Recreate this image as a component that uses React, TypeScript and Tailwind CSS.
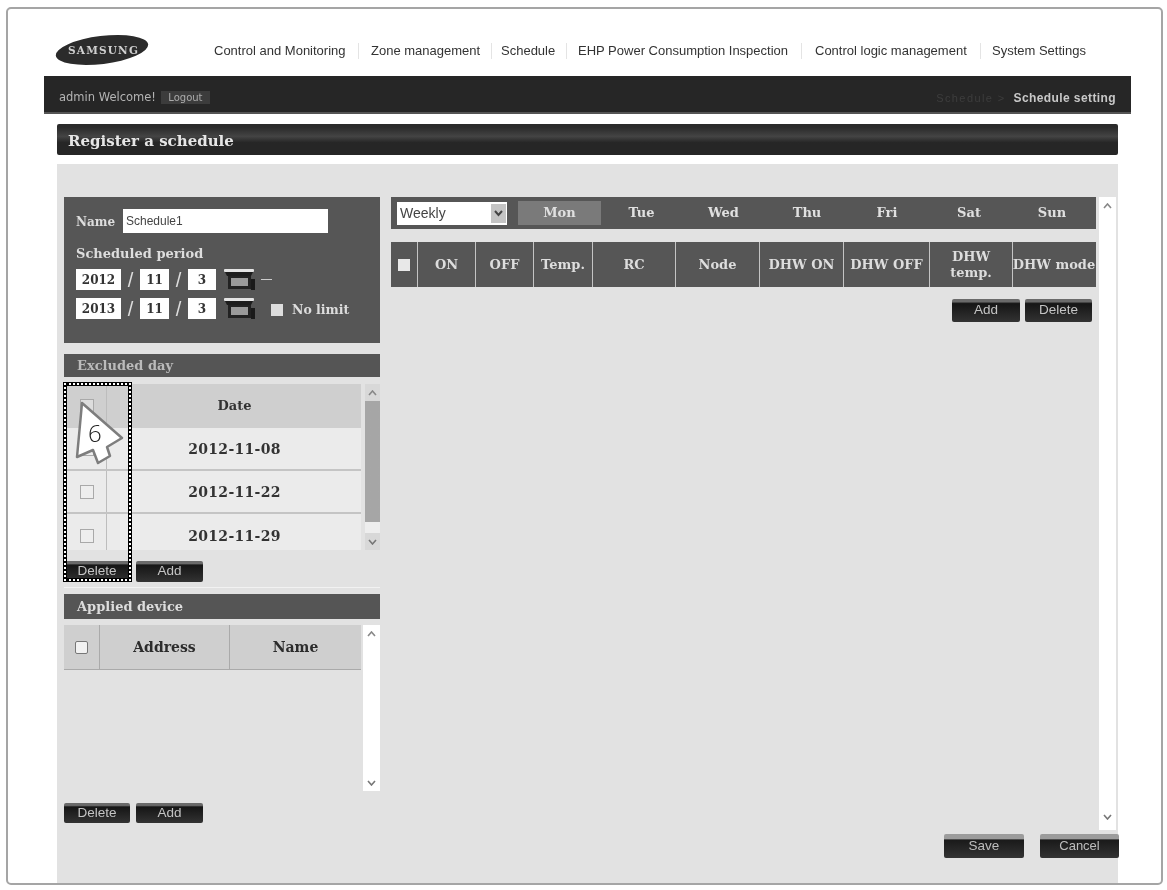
import type { ReactNode } from "react";

const serif = "font-['DejaVu_Serif',serif]";
const sans = "font-['Liberation_Sans',Arial,sans-serif]";

function SamsungLogo() {
  return (
    <svg width="94" height="32" viewBox="0 0 94 32">
      <ellipse cx="47" cy="16" rx="46.5" ry="14" transform="rotate(-7 47 16)" fill="#2b2b2b" />
      <text x="13" y="20" fontFamily="'DejaVu Serif', serif" fontWeight="700" fontSize="10.5" letterSpacing="1.2" fill="#d0d0d0">
        SAMSUNG
      </text>
    </svg>
  );
}

function CalendarIcon() {
  return (
    <svg width="33" height="23" viewBox="0 0 33 23" className="shrink-0">
      <rect x="1" y="1" width="30" height="3" rx="1" fill="#e4e4e4" />
      <path d="M2 4h28l-2 4H4z" fill="#1d1d1d" />
      <path d="M5 8h23v13H5z" fill="#222222" />
      <rect x="8" y="10" width="17" height="8" fill="#9a9a9a" />
      <rect x="28" y="11" width="4" height="11" fill="#1a1a1a" />
    </svg>
  );
}

function DarkButton({ label, className }: { label: string; className: string }) {
  return (
    <button className={`flex items-center justify-center rounded-[2px] bg-gradient-to-b from-[#6a6a6a] from-[12%] via-[#161616] via-[20%] to-[#333333] text-[13.5px] text-[#c4c4c4] ${sans} ${className}`}>
      {label}
    </button>
  );
}

function ScrollEnds({ track, className, below }: { track: string; className: string; below?: string }) {
  return (
    <div className={`flex flex-col ${className}`}>
      <div className="flex h-[17px] items-center justify-center text-[#888888]">
        <svg width="9" height="6" viewBox="0 0 9 6"><path d="M1 5l3.5-4L8 5" fill="none" stroke="currentColor" strokeWidth="1.6" /></svg>
      </div>
      <div className={`flex-1 ${track}`} />
      <div className="flex h-[17px] items-center justify-center text-[#777777]">
        <svg width="9" height="6" viewBox="0 0 9 6"><path d="M1 1l3.5 4L8 1" fill="none" stroke="currentColor" strokeWidth="1.6" /></svg>
      </div>
      {below && <div className={below} />}
    </div>
  );
}

function SectionHead({ children, className }: { children: ReactNode; className: string }) {
  return (
    <div className={`flex w-[316px] items-center bg-[#555555] pl-[13px] text-[13px] font-bold ${serif} ${className}`}>
      {children}
    </div>
  );
}

function DateBox({ value, className }: { value: string; className: string }) {
  return (
    <span className={`flex h-[21px] items-center justify-center bg-white text-xs font-bold text-[#333333] ${serif} ${className}`}>
      {value}
    </span>
  );
}

function DateRow({ year, children }: { year: string; children?: ReactNode }) {
  return (
    <div className="flex items-center text-[#dddddd]">
      <DateBox value={year} className="w-[45px]" />
      <span className="w-[19px] text-center text-xl font-light leading-none">/</span>
      <DateBox value="11" className="w-[29px]" />
      <span className="w-[19px] text-center text-xl font-light leading-none">/</span>
      <DateBox value="3" className="w-[28px]" />
      <span className="ml-[7px]"><CalendarIcon /></span>
      {children}
    </div>
  );
}

function ExcludedRow({ date }: { date: string }) {
  return (
    <div className="flex h-[43px] border-b-2 border-[#c4c4c4] bg-[#ebebeb] last:border-b-0">
      <div className="flex w-[43px] items-center justify-center border-r border-[#bdbdbd] pl-[3px]">
        <span className="size-[14px] border border-[#a9a9a9] bg-[#eeeeee]" />
      </div>
      <div className="w-[25px]" />
      <div className={`flex flex-1 items-center justify-center pr-[24px] text-sm font-bold tracking-[0.3px] text-[#333333] ${serif}`}>{date}</div>
    </div>
  );
}

const navItems: [string, string][] = [
  ["Control and Monitoring", "w-[132px]"],
  ["Zone management", "w-[110px]"],
  ["Schedule", "w-[54px]"],
  ["EHP Power Consumption Inspection", "w-[210px]"],
  ["Control logic management", "w-[153px]"],
  ["System Settings", "w-[96px]"],
];
const navGaps = ["w-[25px]", "w-[20px]", "w-[23px]", "w-[27px]", "w-[24px]"];

const days = [
  ["Tue", "w-[81px]"],
  ["Wed", "w-[83px]"],
  ["Thu", "w-[84px]"],
  ["Fri", "w-[76px]"],
  ["Sat", "w-[88px]"],
  ["Sun", "w-[78px]"],
];

const columns = ["ON", "OFF", "Temp.", "RC", "Node", "DHW ON", "DHW OFF", "DHW temp.", "DHW mode"];

export default function App() {
  return (
    <div className={`h-[890px] w-[1167px] overflow-hidden bg-white pl-[6px] pt-[7px] blur-[0.6px] ${sans}`}>
      <div className="relative h-[878px] w-[1157px] overflow-hidden rounded-[5px] border-2 border-[#a5a5a5] bg-white">
        {/* Top menu */}
        <div className="flex h-[67px] items-start">
          <div className="ml-[47px] mt-[25px] w-[111px]"><SamsungLogo /></div>
          <nav className="ml-[48px] mt-[32px] flex items-center text-[13px] text-[#333333]">
            {navItems.map(([label, width], i) => (
              <div key={label} className="flex items-center">
                <span className={`whitespace-nowrap ${width}`}>{label}</span>
                {i < navGaps.length && (
                  <span className={`flex justify-center ${navGaps[i]}`}>
                    <span className="h-4 w-px bg-[#e4e4e4]" />
                  </span>
                )}
              </div>
            ))}
          </nav>
        </div>

        {/* User bar */}
        <div className="ml-[36px] flex h-[38px] w-[1087px] items-end justify-between border-b-2 border-[#555555] bg-[#262626] pb-[6px] pl-[15px] pr-[15px] text-[11px]">
          <div className="flex items-center font-['DejaVu_Sans',sans-serif] text-[#b4b4b4]">
            <span className="text-[11.5px]">admin Welcome!</span>
            <span className="ml-[5px] flex h-[13px] w-[49px] items-center justify-center bg-[#3c3c3c] text-[10px] text-[#aaaaaa]">Logout</span>
          </div>
          <div className="flex items-center gap-[8px] tracking-[0.4px]">
            <span className="tracking-[1.4px] text-[#3d3d3d]">Schedule &gt;</span>
            <span className={`text-xs font-bold text-[#c8c8c8] ${sans}`}>Schedule setting</span>
          </div>
        </div>

        {/* Title */}
        <div className={`ml-[49px] mt-[10px] flex h-[31px] w-[1061px] items-center rounded-[2px] bg-gradient-to-b from-[#2a2a2a] from-10% via-[#444444] via-40% to-[#262626] to-60% pl-[11px] pt-[3px] text-[15px] font-bold text-[#e6e6e6] ${serif}`}>
          Register a schedule
        </div>

        {/* Content */}
        <div className="ml-[49px] mt-[9px] flex h-[720px] w-[1061px] bg-[#e2e2e2] pt-[33px]">
          {/* Left column */}
          <div className="ml-[7px] flex w-[316px] shrink-0 flex-col">
            <div className="flex h-[146px] flex-col bg-[#565656] pl-[12px] pt-[12px] text-[#dddddd]">
              <div className="flex items-center">
                <span className={`w-[47px] pt-[2px] text-xs font-bold ${serif}`}>Name</span>
                <span className="flex h-[24px] w-[205px] items-center bg-white pl-[3px] text-xs text-[#444444]">Schedule1</span>
              </div>
              <div className={`mt-[12px] text-[13px] font-bold leading-[17px] ${serif}`}>Scheduled period</div>
              <div className="mt-[6px] flex flex-col gap-[6px]">
                <DateRow year="2012"><span className="ml-[5px] h-px w-[11px] bg-[#cccccc]" /></DateRow>
                <DateRow year="2013">
                  <span className="ml-[15px] mt-[2px] size-[12px] bg-[#dddddd]" />
                  <span className={`ml-[9px] mt-[3px] text-[12.5px] font-bold ${serif}`}>No limit</span>
                </DateRow>
              </div>
            </div>

            <SectionHead className="mt-[11px] h-[23px] text-[#bbbbbb]">Excluded day</SectionHead>
            <div className="mt-[7px] flex h-[166px]">
              <div className="w-[297px] overflow-hidden">
                <div className="flex h-[44px] bg-[#cfcfcf]">
                  <div className="flex w-[43px] items-center justify-center border-r border-[#bdbdbd] pl-[3px]">
                    <span className="size-[14px] border border-[#a9a9a9] bg-[#dddddd]" />
                  </div>
                  <div className="w-[25px]" />
                  <div className={`flex flex-1 items-center justify-center pr-[24px] text-[13px] font-bold text-[#333333] ${serif}`}>Date</div>
                </div>
                <ExcludedRow date="2012-11-08" />
                <ExcludedRow date="2012-11-22" />
                <ExcludedRow date="2012-11-29" />
              </div>
              <ScrollEnds track="bg-gradient-to-b from-[#a6a6a6] from-[92%] to-[#eeeeee] to-[92%]" className="ml-[4px] w-[15px] bg-[#d8d8d8]" />
            </div>
            <div className="mt-[11px] flex h-[21px] gap-[6px]">
              <DarkButton label="Delete" className="w-[66px]" />
              <DarkButton label="Add" className="w-[67px]" />
            </div>
            <div className="mt-[5px] h-px bg-[#f2f2f2]" />

            <SectionHead className="mt-[6px] h-[25px] text-[#dddddd]">Applied device</SectionHead>
            <div className="mt-[6px] flex h-[166px] items-start">
              <div className={`grid h-[45px] w-[297px] grid-cols-[36px_130px_131px] border-b border-[#aaaaaa] bg-[#cfcfcf] text-sm font-bold text-[#2c2c2c] ${serif}`}>
                <div className="flex items-center justify-center border-r border-[#aaaaaa]">
                  <span className="size-[13px] rounded-[2px] border border-[#777777] bg-[#f2f2f2]" />
                </div>
                <div className="flex items-center justify-center border-r border-[#aaaaaa]">Address</div>
                <div className="flex items-center justify-center">Name</div>
              </div>
              <ScrollEnds track="bg-white" className="ml-[2px] h-full w-[17px] bg-white" />
            </div>
            <div className="mt-[12px] flex h-[20px] gap-[6px]">
              <DarkButton label="Delete" className="w-[66px]" />
              <DarkButton label="Add" className="w-[67px]" />
            </div>
          </div>

          {/* Right column */}
          <div className="ml-[11px] flex min-w-0 flex-1 flex-col">
            <div className="flex h-[633px]">
              <div className="w-[705px]">
                <div className={`flex h-[32px] items-center bg-[#565656] pl-[6px] text-[13px] font-bold text-[#e0e0e0] ${serif}`}>
                  <div className={`flex h-[23px] w-[110px] items-center justify-between bg-white pl-[3px] pr-[1px] text-sm font-normal text-[#444444] ${sans}`}>
                    Weekly
                    <span className="flex h-[19px] w-[15px] items-center justify-center bg-[#c4c4c4] text-[#444444]">
                      <svg width="9" height="7" viewBox="0 0 9 7"><path d="M1 1l3.5 4L8 1" fill="none" stroke="currentColor" strokeWidth="2" /></svg>
                    </span>
                  </div>
                  <div className="ml-[11px] flex h-[24px] w-[83px] items-center justify-center bg-[#7a7a7a]">Mon</div>
                  {days.map(([day, width]) => (
                    <div key={day} className={`flex items-center justify-center ${width}`}>{day}</div>
                  ))}
                </div>
                <div className={`mt-[13px] grid h-[45px] grid-cols-[26px_58px_58px_59px_83px_84px_84px_86px_83px_83px] bg-[#565656] text-[13px] font-bold leading-[16px] text-[#dddddd] ${serif}`}>
                  <div className="flex items-center justify-center">
                    <span className="size-[12px] bg-[#e8e8e8]" />
                  </div>
                  {columns.map((col) => (
                    <div key={col} className="flex items-center justify-center overflow-hidden whitespace-pre-line border-l border-[#c4c4c4] text-center">
                      {col === "DHW temp." ? "DHW\ntemp." : <span className="whitespace-nowrap">{col}</span>}
                    </div>
                  ))}
                </div>
                <div className="mt-[12px] flex justify-end gap-[5px] pr-[4px]">
                  <DarkButton label="Add" className="h-[23px] w-[68px]" />
                  <DarkButton label="Delete" className="h-[23px] w-[67px]" />
                </div>
              </div>
              <ScrollEnds track="bg-white" className="ml-[3px] w-[17px] bg-white" below="h-[5px]" />
            </div>
            <div className="mt-[4px] flex gap-[16px] pl-[553px]">
              <button className={`h-[24px] w-[80px] shrink-0 rounded-[2px] bg-gradient-to-b from-[#9c9c9c] from-20% via-[#1a1a1a] via-25% to-[#333333] text-[13.5px] text-[#bdbdbd] ${sans}`}>Save</button>
              <button className={`h-[24px] w-[79px] shrink-0 rounded-[2px] bg-gradient-to-b from-[#9c9c9c] from-20% via-[#1a1a1a] via-25% to-[#333333] text-[13px] text-[#bdbdbd] ${sans}`}>Cancel</button>
            </div>
          </div>
        </div>

        {/* Step 6 callout over the excluded day checkboxes */}
        <div className="absolute left-[55px] top-[373px] h-[200px] w-[69px] border-[4px] border-black">
          <div className="absolute -inset-[3px] border-2 border-dotted border-white" />
        </div>
        <svg className="absolute left-[66px] top-[392px]" width="52" height="66" viewBox="0 0 52 66">
          <path d="M8 2L48 37 33 46 36 55 24 62 19 49 3 56z" fill="#ffffff" stroke="#7d7d7d" strokeWidth="2.5" strokeLinejoin="round" />
        </svg>
        <span className="absolute left-[80px] top-[412px] font-['Open_Sans',sans-serif] text-2xl font-light leading-none text-[#222222]">6</span>
      </div>
    </div>
  );
}
